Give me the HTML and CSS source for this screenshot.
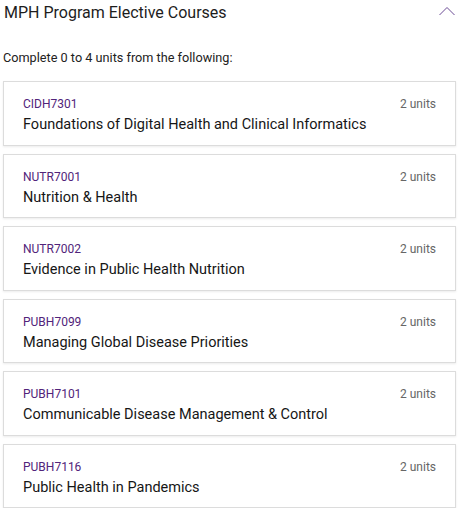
FILE: index.html
```html
<!DOCTYPE html>
<html>
<head>
<meta charset="utf-8">
<link rel="stylesheet" href="styles.css">
</head>
<body>
<div class="section">
  <div class="header">
    <h2 class="title">MPH Program Elective Courses</h2>
    <svg class="chevron" width="16" height="10" viewBox="0 0 16 10"><path d="M0.5 9 L8 1.5 L15.5 9" fill="none" stroke="#6a4a94" stroke-width="1"/></svg>
  </div>
  <p class="intro">Complete 0 to 4 units from the following:</p>
  <div class="list">
    <div class="card"><div class="row"><span class="code">CIDH7301</span><span class="units">2 units</span></div><div class="name">Foundations of Digital Health and Clinical Informatics</div></div>
    <div class="card"><div class="row"><span class="code">NUTR7001</span><span class="units">2 units</span></div><div class="name">Nutrition &amp; Health</div></div>
    <div class="card"><div class="row"><span class="code">NUTR7002</span><span class="units">2 units</span></div><div class="name">Evidence in Public Health Nutrition</div></div>
    <div class="card"><div class="row"><span class="code">PUBH7099</span><span class="units">2 units</span></div><div class="name">Managing Global Disease Priorities</div></div>
    <div class="card"><div class="row"><span class="code">PUBH7101</span><span class="units">2 units</span></div><div class="name">Communicable Disease Management &amp; Control</div></div>
    <div class="card"><div class="row"><span class="code">PUBH7116</span><span class="units">2 units</span></div><div class="name">Public Health in Pandemics</div></div>
  </div>
</div>
</body>
</html>
```
FILE: styles.css
```css
html, body { margin: 0; padding: 0; background: #fff; }
body { font-family: Roboto, "Noto Sans", sans-serif; color: #222; }
.section { padding: 0 4px 0 3px; }
.header { display: flex; justify-content: space-between; align-items: center; height: 26px; }
.title { margin: 0 0 0 1px; font-size: 16px; font-weight: 400; color: #1d1d1d; line-height: 26px; }
.chevron { margin-right: 1px; margin-top: -4px; }
.intro { margin: 22px 0 0 0; font-size: 12.7px; line-height: 20px; color: #222; }
.list { display: flex; flex-direction: column; gap: 8px; margin-top: 13px; }
.card { border: 1px solid #dcdcdc; box-shadow: 0 1px 2px rgba(0,0,0,0.08); padding: 14px 19px 11px 19px; height: 64.5px; box-sizing: border-box; }
.row { display: flex; justify-content: space-between; align-items: baseline; line-height: 16px; }
.code { font-size: 12px; color: #51247a; }
.units { font-size: 12px; color: #666; }
.name { font-size: 14.5px; font-weight: 400; line-height: 20px; color: #161616; margin-top: 3px; }
```
